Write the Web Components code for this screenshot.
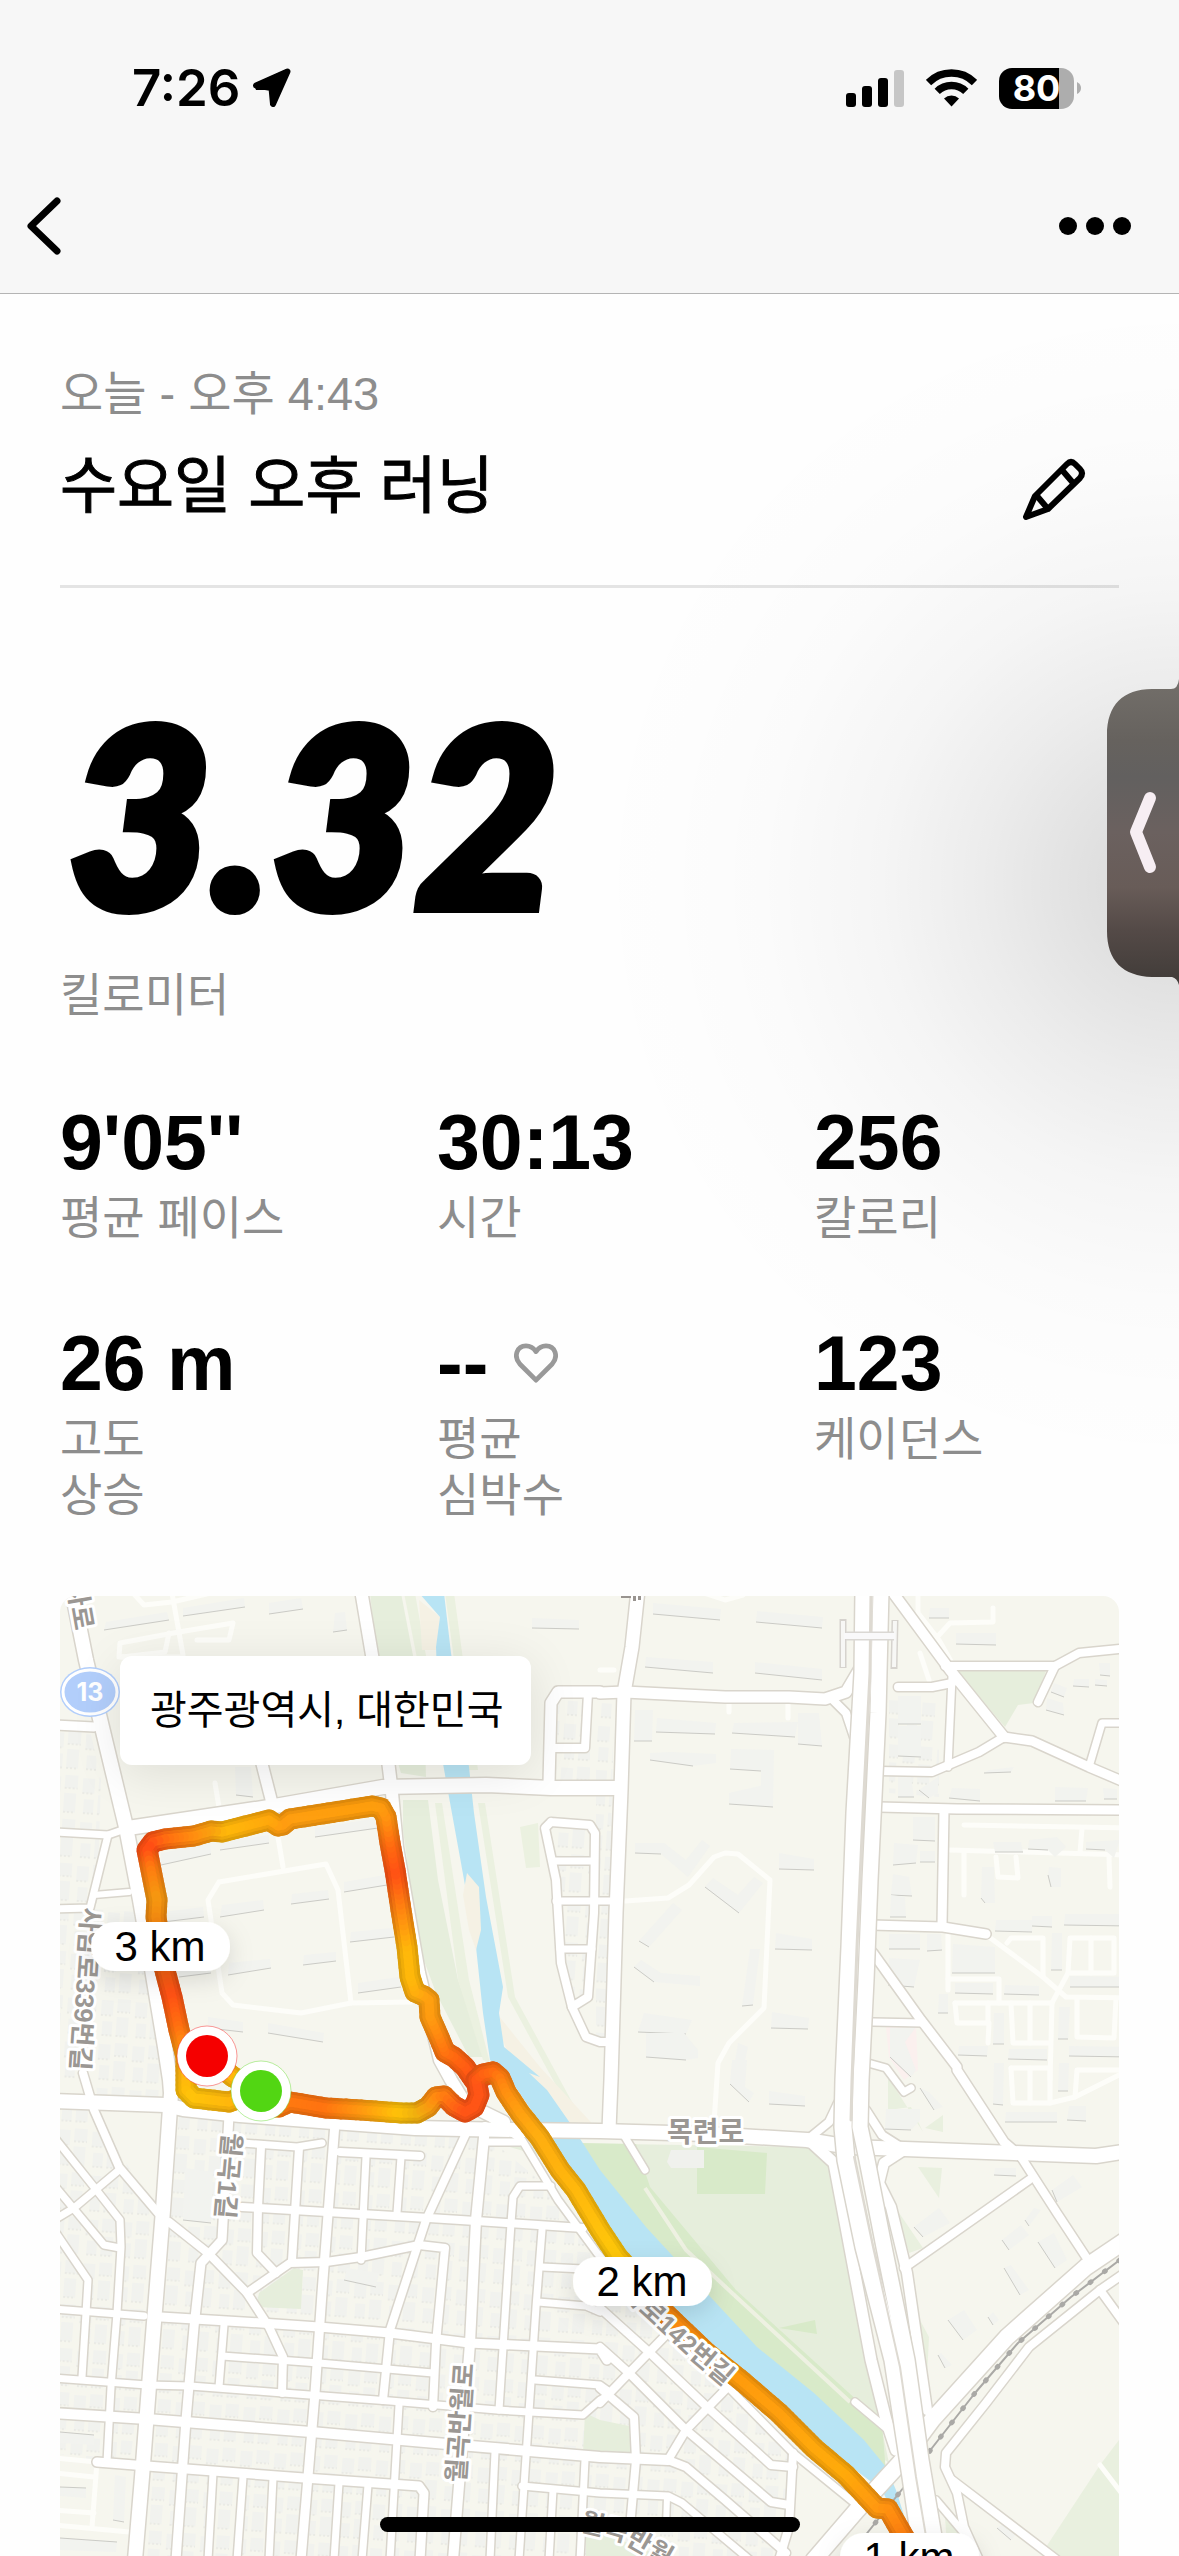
<!DOCTYPE html>
<html lang="ko">
<head>
<meta charset="utf-8">
<meta name="viewport" content="width=device-width, initial-scale=1">
<title>수요일 오후 러닝</title>
<style>
  html, body { margin: 0; height: 100%; }
  body {
    background: #fefefe; color: #000; overflow: hidden;
    font-family: "Liberation Sans", "Noto Sans CJK KR", sans-serif;
    --muted: #8d8d8d; --side: 60px;
  }
</style>
</head>
<body>
<run-app>
  <status-bar slot="top" time="7:26" battery="80"></status-bar>
  <nav-bar slot="top"></nav-bar>
  <run-title when="오늘 - 오후 4:43">수요일 오후 러닝</run-title>
  <run-distance value="3.32">킬로미터</run-distance>
  <stat-grid>
    <run-stat value="9'05''">평균 페이스</run-stat>
    <run-stat value="30:13">시간</run-stat>
    <run-stat value="256">칼로리</run-stat>
    <run-stat value="26 m">고도<br>상승</run-stat>
    <run-stat value="--" heart>평균<br>심박수</run-stat>
    <run-stat value="123">케이던스</run-stat>
  </stat-grid>
  <route-map>광주광역시, 대한민국</route-map>
  <side-tab slot="overlay"></side-tab>
  <home-indicator slot="overlay"></home-indicator>
</run-app>

<script>
const define = (name, render) => customElements.define(name, class extends HTMLElement {
  constructor() { super(); this.attachShadow({ mode: 'open' }); }
  connectedCallback() { this.shadowRoot.innerHTML = render(this); }
});

const BUTTON = 'button{border:0;padding:0;margin:0;background:none;color:inherit;font:inherit;display:block;cursor:pointer} svg{display:block}';

define('run-app', () => `
<style>
  :host { display: flex; flex-direction: column; height: 100vh; position: relative; overflow: hidden; }
  header { flex: none; background: #f7f7f7; border-bottom: 1px solid #b4b4b4; }
  main { flex: 1; min-height: 0; display: flex; flex-direction: column; padding: 68px var(--side) 0; }
</style>
<header><slot name="top"></slot></header>
<main><slot></slot></main>
<slot name="overlay"></slot>`);

define('status-bar', el => `
<style>
  :host { display: flex; align-items: center; justify-content: space-between; height: 176px; padding: 0 98px 0 132px; }
  div { display: flex; align-items: center; }
  .time { gap: 12px; font: 600 51px/60px Inter, sans-serif; }
  .icons { gap: 22px; }
  svg { display: block; }
  .battery { display: flex; align-items: center; gap: 3px; }
  .cell { width: 75px; height: 41px; border-radius: 13px; justify-content: center; color: #fff;
    font: 700 36px/41px Inter, sans-serif; background: linear-gradient(90deg, #000 60px, #adadad 60px); }
</style>
<div class="time"><span>${el.getAttribute('time')}</span>
  <svg width="40" height="40" viewBox="0 0 40 40"><path d="M4 17.500 35.500 3.500 21 36 19.500 20Z" stroke="#000" stroke-width="6" stroke-linejoin="round"/><path d="M2 16 35 1 22 37 18 37 18 22 4 22Z"/></svg>
</div>
<div class="icons">
  <svg width="58" height="38" viewBox="0 0 58 38"><rect y="24" width="10" height="14" rx="3"/><rect x="16" y="17" width="10" height="21" rx="3"/><rect x="32" y="9" width="10" height="29" rx="3"/><rect x="48" y="1" width="10" height="37" rx="3" fill="#c6c6c6"/></svg>
  <svg width="51" height="38" viewBox="0 0 51 38"><g fill="none" stroke="#000" stroke-width="7.500"><path d="M2.500 13.500A32.500 32.500 0 0 1 48.500 13.500"/><path d="M11.200 22.400A20.500 20.500 0 0 1 39.800 22.400"/></g><path d="M18 29.500a11 11 0 0 1 15 0L25.500 37.500z"/></svg>
  <div class="battery"><div class="cell">${el.getAttribute('battery')}</div><svg width="4" height="12" viewBox="0 0 4 12"><path d="M0 0q4 2 4 6t-4 6z" fill="#adadad"/></svg></div>
</div>`);

define('nav-bar', () => `
<style>
  ${BUTTON}
  :host { display: flex; align-items: center; justify-content: space-between; height: 100px; padding: 0 47px 17px 25px; }
</style>
<button aria-label="뒤로"><svg width="38" height="60" viewBox="0 0 38 60"><path d="M32 5 6 30 32 55" fill="none" stroke="#000" stroke-width="7" stroke-linecap="round" stroke-linejoin="round"/></svg></button>
<button aria-label="더 보기"><svg width="74" height="20" viewBox="0 0 74 20"><circle cx="10" cy="10" r="9"/><circle cx="37" cy="10" r="9"/><circle cx="64" cy="10" r="9"/></svg></button>`);

define('run-title', el => `
<style>
  ${BUTTON}
  :host { display: block; flex: none; padding-bottom: 54px; border-bottom: 3px solid #e4e4e4; }
  p { margin: 0 0 17px; font-size: 47px; line-height: 64px; color: var(--muted); }
  .row { display: flex; align-items: center; justify-content: space-between; padding-right: 29px; }
  h1 { margin: 0; font-weight: 400; font-size: 62px; line-height: 88px; -webkit-text-stroke: 1px #000; }
</style>
<p>${el.getAttribute('when')}</p>
<div class="row"><h1><slot></slot></h1>
  <button aria-label="이름 편집"><svg width="72" height="72" viewBox="0 0 72 72" fill="none" stroke="#000" stroke-width="6" stroke-linejoin="round"><path d="M8 66 17 45 49 13Q53 9 57 13L62 18Q66 22 62 27L30 58Z"/><path d="M44 19 56 33M19 45 30 58"/></svg></button>
</div>`);

define('run-distance', el => `
<style>
  :host { display: block; flex: none; margin-top: 104px; color: var(--muted); font-size: 46px; line-height: 56px; }
  strong { display: block; margin-bottom: 35px; color: #000; font: italic 900 248px/240px Lato, sans-serif; -webkit-text-stroke: 10px #000; padding-left: 8px; }
</style>
<strong>${el.getAttribute('value')}</strong><slot></slot>`);

define('stat-grid', () => `
<style>
  :host { display: grid; flex: none; grid-template-columns: 377fr 377fr 305fr; row-gap: 77px; margin: 79px 0 73px; }
</style><slot></slot>`);

define('run-stat', el => `
<style>
  :host { display: block; color: var(--muted); font-size: 46px; line-height: 56px; }
  .value { display: flex; align-items: center; gap: 26px; margin-bottom: 8px; color: #000; font-weight: 700; font-size: 77px; line-height: 80px; white-space: pre; }
</style>
<div class="value">${el.getAttribute('value')}${el.hasAttribute('heart') ? '<svg width="44" height="40" viewBox="0 0 46 42"><path d="M23 39 6 22C-1 14 3 3 12.500 3Q19 3 23 9Q27 3 33.500 3C43 3 47 14 40 22Z" fill="none" stroke="#999" stroke-width="5" stroke-linejoin="round"/></svg>' : ''}</div><slot></slot>`);

define('side-tab', () => `
<style>
  ${BUTTON}
  :host { position: absolute; top: 294px; right: 0; width: 600px; height: 1282px; pointer-events: none; display: block;
    background: radial-gradient(circle at 100% 590px, rgba(0,0,0,.15) 0, rgba(0,0,0,.12) 80px, rgba(0,0,0,.07) 200px, rgba(0,0,0,.035) 300px, rgba(0,0,0,.012) 420px, rgba(0,0,0,.004) 520px, transparent 600px); }
  button { position: absolute; top: 385px; right: 0; pointer-events: auto; }
</style>
<button aria-label="사이드 패널 열기"><svg width="72" height="310" viewBox="0 0 72 310">
  <defs><linearGradient id="g" x1="0" y1="0" x2="0" y2="1"><stop offset="0" stop-color="#736f6a"/><stop offset=".2" stop-color="#66625e"/><stop offset=".32" stop-color="#62605f"/><stop offset=".5" stop-color="#6b615f"/><stop offset=".68" stop-color="#685c58"/><stop offset=".82" stop-color="#544a47"/><stop offset="1" stop-color="#403b38"/></linearGradient></defs>
  <path d="M72 0Q71 10 64 10H45C16 10 0 26 0 56V252C0 282 16 297 45 298H65Q70 299 72 306Z" fill="url(#g)"/>
  <path d="M43 119 29 153 43 188" fill="none" stroke="#f7eef3" stroke-width="12" stroke-linecap="round" stroke-linejoin="round"/>
</svg></button>`);

define('home-indicator', () => `
<style>:host { position: absolute; left: 50%; bottom: 24px; width: 420px; height: 15px; margin-left: -210px; border-radius: 8px; background: #000; }</style>`);

/* ---------- map data ----------
   Four survey tiles, each with its own origin; points are "u,v" in tile units. */
const TILE = { A: [-20, -16], B: [540, -16], C: [-20, 464], D: [540, 464] };
const at = (t, u, v) => [Math.round(TILE[t][0] + u / 2.8), Math.round(TILE[t][1] + v / 3)];
/* "A 1,2 3,4 B 5,6" -> list of map points */
const points = text => {
  let tile = 'A'; const out = [];
  for (const w of text.trim().split(/\s+/)) {
    if (TILE[w]) tile = w; else out.push(at(tile, ...w.split(',').map(Number)));
  }
  return out;
};
const line = text => 'M' + points(text).map(p => p.join(' ')).join('L');

const ROADS = [
 [15,'A 90,30 130,240 170,430 240,740 280,960 310,1150 350,1400 365,1500 C 368,100 345,450 310,900 285,1250 265,1500'],
 [13,'A 900,30 960,420 985,640 1000,800 1060,1180 1120,1440 1150,1500 C 1190,130 1300,185'],
 [15,'A 245,745 640,680 960,620 1250,615 1430,625 1568,625 B 50,625'],
 [10,'A 40,435 150,440'],[8,'A 40,755 190,765 245,745'],[8,'A 190,765 140,985 40,988'],[7,'A 150,945 250,935'],
 [12,'A 620,540 650,670'],[12,'A 1425,610 1432,370 1450,335 1568,335 B 0,338 70,335'],[9,'A 1430,505 1525,505 1535,340'],
 [9,'A 1430,725 1540,735 1555,760 1550,1000 1535,1250 1490,1280 1460,1150 1445,900 1415,745 1430,725'],
 [8,'A 1440,842 1550,842'],[8,'A 1445,963 1568,963 B 35,963'],[8,'A 1455,1108 1545,1108'],[9,'A 1490,1280 1530,1370 1568,1385 B 20,1385'],
 [14,'B 107,30 90,200 68,340 58,630 45,1000 38,1200 30,1500 D 25,210'],
 [12,'B 70,335 350,350 530,352 630,358 690,335 725,270'],[9,'B 650,358 690,400 712,470'],
 [11,'B 815,30 980,270 1130,470'],[10,'B 1130,470 1210,482 1370,560 1480,612'],[9,'B 965,258 1275,258 1340,218 1480,203'],
 [9,'B 1275,258 1225,365'],[9,'B 835,320 930,320 985,310'],[8,'B 985,290 975,560'],[9,'B 780,572 930,575 1060,515 1130,470'],
 [8,'B 1370,560 1405,430 1480,428'],[10,'B 780,680 1000,688 1480,690'],[10,'B 962,690 957,1035'],[10,'B 760,1035 960,1040 1080,1062'],
 [10,'B 765,1120 900,1320 1000,1460 D 1000,30 1130,245 1180,290'],[9,'D 1180,290 1280,460 1365,600'],
 [8,'B 765,1325 905,1328'],[8,'B 750,1450 800,1465 D 800,25 850,95 870,85'],
 [15,'C 40,122 350,135 400,148 560,165 820,185 1050,205 1330,210 1568,212 D 300,222 580,240 700,262 1160,278 1390,288 1480,274'],
 [9,'D 665,130 640,185 580,240'],[9,'D 745,150 790,225 850,268'],
 [12,'D 590,245 655,310 760,900 800,1080 830,1170'],[11,'D 850,270 795,310 780,370 815,440 860,640 915,1050'],
 [9,'D 850,625 1200,360'],[17,'D 600,1500 720,1350 840,1210 930,1080 1140,830 1360,620 1480,535'],
 [9,'D 1480,630 1400,690 1200,860 1080,1030 970,1180 965,1220 1000,1300 1020,1400 1060,1500'],
 [9,'D 1400,690 1480,810'],[9,'D 985,1260 1280,1500'],[8,'D 940,1320 1020,1420'],[8,'D 715,1025 800,1105'],[8,'D 70,230 125,330'],
 [9,'C 120,40 150,150 220,320 330,460'],[9,'C 360,485 470,580 580,700 640,800 680,890 678,1000'],
 [8,'C 40,230 150,380 225,480 228,560 215,760 200,980 188,1205'],[8,'C 40,480 95,445 220,330'],[8,'C 40,375 180,555 225,565'],
 [8,'C 40,510 135,660 130,760 118,950'],[8,'C 40,748 290,768'],[10,'C 340,770 620,790 780,800 980,820 1200,848 1568,868 D 20,900'],
 [8,'C 40,955 300,975 420,978 680,1000 980,1022 1280,1050 1520,1065 1568,1020 D 25,1005'],[11,'C 40,1058 300,1078 760,1115 1140,1152 1568,1190 D 190,1200'],
 [10,'C 160,1205 300,1218 740,1255 1060,1278 1075,1300 1065,1500'],[10,'C 530,165 510,540 450,610 430,800 410,1080 380,1500'],
 [9,'C 620,260 610,440 608,580 660,640'],[9,'C 725,265 705,600'],[9,'C 565,440 1090,475 1220,482 1520,505'],
 [8,'C 565,250 720,262 790,250'],[9,'C 840,275 1065,288'],[8,'C 912,290 900,600'],[8,'C 1010,290 1000,460'],
 [10,'C 825,190 790,700 770,1000 730,1500'],[9,'C 580,700 700,610 800,605 900,590 1060,555 1135,565 1110,850 1100,1040'],
 [9,'C 1200,200 1080,480 980,810 960,1020'],[11,'C 1245,200 1220,480 1205,850 1180,1200 1155,1500'],[8,'C 1250,245 1345,245'],
 [8,'C 1430,378 1345,378 1325,410 1320,490 1285,1050'],[8,'C 1405,510 1390,740 1365,1100 1340,1500'],[8,'C 1405,620 1520,628'],
 [8,'C 1395,725 1530,738 1568,755'],[8,'C 1385,960 1568,975 D 20,990'],[8,'C 1350,1278 1568,1298 D 190,1308 230,1330 420,1500'],[8,'C 515,795 500,980'],
 [8,'C 510,888 780,910 1100,940'],[8,'C 1005,1035 980,1500'],[8,'C 485,1240 470,1500'],[8,'C 568,1250 552,1500'],[8,'C 652,1255 640,1500'],
 [8,'C 838,1270 822,1500'],[8,'C 918,1275 902,1500'],[8,'C 1275,1175 1260,1500'],[8,'C 1525,1200 1512,1500'],[8,'C 1435,1290 1425,1500'],
 [8,'C 1230,150 1350,240 1450,420 1560,580 D 50,650 200,830 360,985 540,1180 720,1335'],
 [9,'D 0,745 140,880 300,1040 480,1215 540,1220'],[9,'D 0,860 80,940 240,1110 480,1325 530,1335'],[9,'D 0,1030 80,940 180,830'],
 [9,'D 350,990 240,1110 190,1200'],[9,'D 0,985 95,1070 100,1200 85,1400'],[9,'D 190,1200 240,1220 350,1320 520,1480'],
 [9,'D 540,1180 530,1400 500,1500'],[7,'D 188,1310 185,1400'],
];
/* carriageways of the urban expressway lie above every other road */
const EXPRESS = [
 [18,'B 740,30 735,280 715,700 700,1100 683,1500 D 680,200 690,300 740,560 820,900 870,1250 905,1500'],
 [16,'B 788,30 778,400 755,900 745,1200 730,1500 D 728,200 748,300 795,560 860,900 900,1200 945,1500'],
];
const PATHS = [
 'B 70,963 190,955 250,915 320,830 350,818 385,822 475,900 460,1285 360,1390 330,1450 D 318,190',
 'A 500,905 800,853 835,930 870,1270 730,1300 540,1275 510,1240 470,960 500,905','A 665,770 680,860','A 490,610 505,700','A 870,1270 1040,1265',
 'A 370,40 400,225','A 260,40 290,75 370,65 480,40','A 400,230 220,230 225,190 390,155 540,130 530,180 440,180','A 360,160 350,215 230,230',
 'B 980,810 1480,825','B 1020,735 1480,745','B 1020,820 1020,945','B 1350,745 1345,820','B 1110,830 1115,890 1170,895 1165,830',
 'B 1090,1070 1240,1190 1305,1250 1480,1255','B 1140,1090 1150,1073 1240,1073 1240,1190','B 1310,1180 1315,1073 1440,1073 1440,1180 1310,1180 1265,1270 1260,1500',
 'B 1375,1073 1375,1180','B 995,1270 1265,1270','B 995,1270 1000,1330 1090,1330 1087,1390','B 1087,1270 1087,1330','B 1150,1270 1155,1390 1260,1390',
 'B 1205,1270 1205,1390','B 1335,1255 1335,1370 1440,1375 1445,1255','B 975,1050 975,1230','B 975,1197 1118,1197 1118,1270',
 'D 1150,25 1155,130 1260,130 1330,110 1480,30','D 1150,25 1260,25 1260,130','D 1205,25 1205,130','D 1330,110 1335,30 1480,30',
 'B 890,40 890,100 950,180 985,250','B 950,165 980,128 1100,125 1100,85','B 895,220 920,300','B 0,270 40,270','B 360,370 360,395','B 527,370 527,415',
 'B 290,40 350,60 400,45','B 1425,830 1428,920',
 'C 40,1195 160,1205 145,1400','C 40,1240 150,1252','C 40,1350 150,1360','C 40,1395 250,1415','D 1400,1215 1480,1330',
];
const GREENS = [
 ['#e6eedc','A 925,40 1010,40 1075,400 1080,590 1010,580 960,400'],['#ebf1e0','A 1020,40 1050,40 1110,400 1085,400'],['#ebf1e0','A 1135,40 1160,40 1225,570 1200,570'],
 ['#e6eedc','A 1015,660 1085,660 1115,900 1170,1200 1250,1430 1200,1430 1110,1240 1060,1100 1015,750'],['#ebf1e0','A 1105,670 1125,670 1200,1200 1260,1450 1240,1440 1170,1200'],
 ['#ebf1e0','A 1225,670 1245,670 1330,1250 C 1505,160 1490,165 A 1310,1250'],['#ebf1e0','A 1345,740 1395,730 1400,860 1360,865'],
 ['#f5f1e4','A 1060,60 1120,110 1110,210 1070,210'],['#f5f1e4','C 1250,-180 1400,20 1568,215 1490,215 1370,40 1320,0'],
 ['#e6eedc','D -300,245 590,262 640,320 690,600 810,1210 600,1050 300,720 -30,330'],
 ['#d8eac9','D -60,248 100,252 140,380 380,690 790,1090 800,1240 600,1050 130,540 -60,350'],
 ['#d8eac9','D 272,262 467,278 462,402 272,402'],['#d8eac9','D 500,803 603,780 607,822'],['#f0f1ed','D 200,270 290,270 292,325 200,325 188,305'],
 ['#e6eedc','B 1000,272 1250,272 1215,368 1170,375 1135,440'],['#e9f0df','D 805,50 905,215 870,140 805,150'],['#e9f0df','D 910,205 960,165 960,215'],
 ['#e9f0df','D 890,320 957,325 950,415'],['#e9f0df','D 825,440 903,565 865,580'],['#e9f0df','D 875,740 922,830 915,950'],
 ['#e9f0df','D 1480,1100 1400,1215 1250,1460 1290,1500 1480,1500'],['#e9f0df','D 965,1370 1040,1430 1060,1500 975,1500'],
 ['#e6eedc','C 605,740 612,700 710,625 737,630 732,747'],['#e6eedc','C 1525,1060 1568,1080 D 95,1100 90,1195 C 1520,1180'],
 ['#e6eedc','D -40,1410 60,1440 200,1500 -40,1500'],['#fbf0ee','B 800,1340 885,1340 890,1470 850,1500 810,1430'],
];
const RIVER = 'A 1060,40 1130,40 1150,220 1200,560 1215,700 1250,950 1295,1220 1285,1300 1300,1400 1400,1490 C 1370,40 1420,90 1485,190 1568,330 D 130,500 290,690 440,860 600,1000 740,1140 800,1220 830,1290 880,1460 840,1400 790,1290 640,1170 340,900 240,790 100,620 -20,450 C 1485,320 1300,30 A 1260,1440 1240,1300 1220,1100 1180,850 1145,650 1120,500 1110,200 1120,110';
const SAND = ['A 1185,945 1195,880 1228,920 1235,1050 1220,1110 1200,1050'];
/* apartment blocks: footprint, then the shaded lower edge */
const BLOCKS = [
 'A 180,150 360,120 355,95 185,125','A 400,108 575,80 570,55 400,85','A 640,103 735,88 730,55 640,70','A 820,157 860,150 855,95 825,100','A 770,770 945,743 945,715 770,745',
 'A 505,810 640,790 640,765 505,785','A 340,855 480,822 475,790 340,820','A 850,935 972,915 965,885 850,905','A 505,1010 628,990 625,960 510,975','A 703,972 808,957 805,930 705,942',
 'A 868,1087 990,1072 985,1045 870,1055','A 525,1186 648,1165 645,1137 530,1150','A 735,1156 830,1142 828,1115 738,1125','A 890,1240 1012,1222 1005,1190 890,1210','A 345,1025 460,1010 455,980 345,995',
 'A 390,1192 480,1180 478,1150 390,1165','A 470,1345 567,1357 567,1325 470,1310','A 637,1360 792,1387 795,1360 637,1330','A 1378,145 1510,148 1510,120 1378,115','A 550,645 595,650 590,560 545,560',
 'B 148,102 336,121 338,88 148,70','B 436,125 622,143 625,110 440,94','B 125,260 315,280 317,247 130,230','B 433,278 621,299 622,268 435,245','B 920,115 978,115 978,85 925,85','B 998,193 1108,195 1108,158 998,158',
 'B 833,432 900,433 900,348 835,348','B 833,528 900,530 900,438 833,438','B 95,482 145,483 147,390 98,390','B 158,455 322,463 325,428 160,415','B 370,460 545,470 553,425 375,430','B 553,492 622,498 613,400 555,400',
 'B 365,568 450,573 450,640 485,680 488,510 368,508','B 362,672 483,680 485,610 362,640','B 140,540 260,558 325,550 325,523 200,515 140,520','B 97,820 172,822 247,890 307,797 285,780 240,840 180,790 98,790',
 'B 295,922 389,1000 455,908 430,890 385,945 315,895','B 500,867 600,869 600,838 500,820','B 110,1083 137,1102 229,990 205,970','B 490,1107 593,1109 593,1077 492,1060','B 95,1162 150,1205 280,1218 280,1187 170,1180 115,1140',
 'B 398,1278 428,1276 448,1108 420,1108','B 480,1343 583,1347 585,1315 482,1297','B 107,1357 240,1362 258,1320 122,1298','B 130,1430 240,1440 275,1435 275,1410 235,1360 130,1360','B 370,1498 395,1500 413,1400 385,1390',
 'B 875,780 938,782 938,712 877,712','B 815,945 873,947 865,890 820,883','B 820,855 885,850 890,795 822,790','B 895,847 938,847 938,812 897,812','B 813,1010 857,1012 853,950 815,945','B 808,1108 895,1108 895,1062 810,1062',
 'B 915,1112 957,1110 955,1062 915,1062','B 985,1178 1105,1180 1105,1100 987,1092','B 805,1215 880,1220 895,1140 808,1135','B 812,1430 870,1490 885,1470 855,1385 885,1340 812,1345',
 'B 1105,815 1185,815 1180,785 1100,785','B 1197,806 1255,810 1275,832 1305,800 1280,770 1200,780','B 1360,808 1415,810 1440,835 1455,780 1360,785','B 1068,955 1077,970 1105,970 1103,860 1070,860','B 1255,885 1262,920 1290,922 1290,865 1258,862',
 'B 1107,1052 1210,1055 1210,1020 1110,1020','B 1210,1038 1265,1040 1265,1008 1210,1008','B 1300,1035 1480,1038 1480,1003 1302,1003','B 1263,1170 1293,1171 1293,1060 1266,1060','B 993,1240 1100,1243 1100,1210 993,1208',
 'B 1132,1243 1230,1245 1230,1217 1133,1215','B 1317,1220 1480,1222 1480,1190 1317,1187','B 946,1298 975,1300 975,1243 948,1243','B 1101,1392 1130,1393 1132,1300 1103,1300','B 1283,1377 1310,1378 1315,1282 1286,1282',
 'B 1003,1425 1083,1427 1085,1398 1005,1398','B 1143,1437 1252,1439 1252,1408 1145,1408','B 1314,1428 1480,1430 1480,1400 1314,1398','D 1100,133 1127,135 1130,10 1103,10','D 1283,92 1310,94 1314,10 1286,10','D 1135,185 1280,187 1280,155 1137,155',
 'D 1308,180 1360,184 1362,138 1312,138','D 473,133 573,139 573,107 473,92','D 365,72 417,125 432,100 405,80 412,0 370,0','D 797,208 870,210 895,180 895,147 800,147','D 895,85 935,150 960,140 920,95','D 880,500 905,532 980,490 950,445',
 'D 1125,540 1145,570 1200,525 1180,495','D 1225,545 1275,625 1308,600 1270,520','D 1265,390 1280,425 1350,380 1325,345','D 1190,480 1200,498 1235,450 1215,445','D 1130,625 1175,705 1200,690 1150,615','D 975,780 1015,840 1055,810 1020,750',
 'D 945,885 965,925 985,915 955,880','D 1085,770 1100,795 1117,780 1100,755','D 1103,345 1165,349 1165,325 1105,325','D 1112,1405 1150,1440 1175,1410 1130,1390',
 'B 1075,580 1150,575 1158,560 1090,570','B 833,650 878,650 870,590 835,590','B 893,630 920,655 945,640 945,590','B 978,655 1065,663 1065,628 985,625','B 1275,662 1362,663 1365,625 1275,622','B 1410,657 1448,658 1448,628 1408,625',
 'B 1250,390 1298,405 1295,370 1252,355','B 1262,335 1300,352 1308,325 1270,308','B 1323,318 1368,320 1368,298 1328,298','B 1385,315 1420,318 1420,300 1387,298','B 1400,285 1427,287 1427,250 1398,250',
 'C 56,1115 152,1125 150,1155 56,1150','C 56,1280 130,1285 130,1313 56,1308','C 56,1433 215,1445 213,1475 56,1470','C 205,1380 235,1385 242,1250 210,1245','C 400,480 480,490 485,335 405,325','C 850,660 940,680 950,640 860,625',
];
/* areas filled with small houses */
const DENSE = ['A 40,450 140,450 170,600 160,980 190,1100 C 120,60 40,60','A 130,980 270,980 350,1500 C 330,110 160,110','C 40,150 150,150 340,480 250,1230 40,1180','C 390,170 1230,210 1430,390 1568,600 D 540,1190 520,1500 C 300,1500 360,480','A 1440,340 1540,340 1540,600 1440,600','A 1440,740 1550,740 1540,1260 1480,1260','B -10,360 40,360 20,1370 -10,1370','B 810,350 950,350 950,650 810,640'];

/* recorded track: tile, u, v, pace colour */
const TRACK = `C 619,93 ff7d10|C 600,140 ff8a10|C 670,142 ff7d10|C 700,125 ff7a10|C 800,145 ff7210|C 900,150 ff9510|C 1010,158 ffc208|C 1055,158 f0b20e|C 1085,142 f5a010|C 1110,110 ff8d10|C 1130,108 ff8010|C 1160,138 ff6a14|C 1190,155 ff5516|C 1215,140 ff5516|C 1228,105 ff5516|C 1222,60 ff5516|C 1240,42 ff6012|C 1268,35 ff6a10|C 1288,55 ff7a10|C 1305,95 ff8d10|C 1345,160 ff9f10|C 1400,235 ffae10|C 1455,330 ffb20e|C 1500,390 ffb80c|C 1568,510 ffc00c|D 50,590 ffc808|D 110,660 ffb40c|D 180,755 ff8a10|D 300,880 ff920e|D 400,965 ff9c0c|D 500,1060 ff9f0e|D 600,1165 ffa80c|D 690,1245 ffaa0a|D 735,1300 ffa00c|D 775,1345 ff9a10|D 805,1348 ff9210|D 850,1430 ff8010|D 890,1500 ff7a10`;
const TRACK_END = `A 1268,1475 ff6a10|A 1215,1500 ff5516|A 1190,1460 ff5a14|A 1160,1432 ff6510|A 1135,1415 ff7010|A 1115,1365 ff8510|A 1092,1310 ff9a10|A 1090,1260 ff9f10|A 1075,1248 ffa010|A 1050,1235 ffac0e|A 1035,1190 ffb80a|A 1028,1100 ffb80a|A 1010,990 ff8a10|A 995,870 ff5014|A 980,790 ff6a10|A 968,710 ff9010|A 955,685 ff9a10|A 930,677 ff9f0e|A 860,690 ff9f0e|A 700,718 ff9f10|A 680,735 ff9c10|A 665,738 ff9c10|A 640,720 ffa60c|A 510,757 ffb80a|A 480,752 f8a40e|A 430,768 ff9210|A 350,777 ff7010|A 315,785 ff5a14|A 300,810 ff4a14|A 310,870 ff7a10|A 328,960 f59810|A 325,1010 f58e10|A 345,1150 f06a10|A 370,1250 ff5014|A 390,1350 ff7010|A 408,1430 ff9f10|A 408,1500 ffb810|C 410,90 ffbc08|C 430,115 ffc40a|C 530,125 ffb80c|C 619,93 ffae0c|C 540,50 ffb80a|C 467,-12 ffb810`;

const mix = (a, b, k, dim) => '#' + [0, 2, 4].map(i => {
  const p = parseInt(a.substr(i, 2), 16), q = parseInt(b.substr(i, 2), 16);
  return Math.round((p + (q - p) * k) * dim).toString(16).padStart(2, '0');
}).join('');
const track = text => {
  const pts = text.split('|').map(s => { const [t, uv, c] = s.split(' '); return [...at(t, ...uv.split(',').map(Number)), c]; });
  return [[21, .87], [15, .94], [9, 1]].map(([w, dim]) => {
    let out = '';
    for (let i = 1; i < pts.length; i++) {
      const [x0, y0, c0] = pts[i - 1], [x1, y1, c1] = pts[i];
      const n = Math.max(1, Math.round(Math.hypot(x1 - x0, y1 - y0) / 5));
      for (let k = 0; k < n; k++) {
        const p = j => `${(x0 + (x1 - x0) * j / n).toFixed(1)} ${(y0 + (y1 - y0) * j / n).toFixed(1)}`;
        out += `<path d="M${p(k)}L${p(k + 1)}" stroke="${mix(c0, c1, (k + .5) / n, dim)}"/>`;
      }
    }
    return `<g stroke-width="${w}">${out}</g>`;
  }).join('');
};
const roads = list => `<g stroke="#d9d5cc">${list.map(([w, p]) => `<path stroke-width="${w + 2}" d="${line(p)}"/>`).join('')}</g><g stroke="#fff">${list.map(([w, p]) => `<path stroke-width="${w - 1}" d="${line(p)}"/>`).join('')}</g>`;
const kmPill = (x, y, text) => `<g><rect x="${x - 69}" y="${y - 24}" width="139" height="49" rx="24" fill="#fff" filter="url(#soft)"/><text x="${x}" y="${y + 15}" text-anchor="middle" font-size="42">${text}</text></g>`;
const dot = (x, y, c) => `<circle cx="${x}" cy="${y}" r="30" fill="#fff" stroke="${c}" stroke-opacity=".4"/><circle cx="${x}" cy="${y}" r="21" fill="${c}"/>`;

define('route-map', () => `
<style>
  :host { display: block; position: relative; flex: 1; min-height: 0; overflow: hidden; border-radius: 16px 16px 0 0; background: #f6f6ee; }
  svg { display: block; width: 100%; height: 100%; }
  .place { position: absolute; left: 60px; top: 60px; padding: 0 28px 0 30px; border-radius: 12px; background: #fff; color: #000;
    font-size: 40px; line-height: 109px; box-shadow: 0 8px 50px rgba(0,0,0,.1); white-space: nowrap; }
  .street { font: 700 26px "Liberation Sans", "Noto Sans CJK KR", sans-serif; fill: #9b9793; stroke: #fff; stroke-width: 6px; paint-order: stroke; stroke-linejoin: round; }
</style>
<svg viewBox="0 0 1059 960" preserveAspectRatio="xMinYMin slice" role="img" aria-label="러닝 경로">
  <defs>
    <filter id="soft" x="-40%" y="-60%" width="180%" height="260%"><feDropShadow dx="0" dy="8" stdDeviation="12" flood-opacity=".13"/></filter>
    <pattern id="lots" width="34" height="44" patternUnits="userSpaceOnUse" patternTransform="rotate(4)"><path d="M2 4h12v15H2zM18 2h13v13H18zM4 25h10v14H4zM18 20h12v19H18z" fill="#f1f2ee"/><path d="M2 19h12M18 15h13M4 39h10M18 39h12" stroke="#e2e2dd" stroke-dasharray="2 2"/></pattern>
    <path id="p142" d="${line('D 22,640 94,742 234,880 400,1030')}"/>
    <path id="pBan" d="${line('C 1510,1410 D 0,1425 60,1442 200,1530')}"/>
  </defs>
  <g fill="url(#lots)">${DENSE.map(p => `<path d="${line(p)}Z"/>`).join('')}</g>
  ${GREENS.map(([c, p]) => `<path fill="${c}" d="${line(p)}Z"/>`).join('')}
  <path fill="#b8e4f4" d="${line(RIVER)}Z"/>
  ${SAND.map(p => `<path fill="#f5f1e4" d="${line(p)}Z"/>`).join('')}
  <g fill="none" stroke="#fdfdf9" stroke-width="5" stroke-linejoin="round" stroke-linecap="round">${PATHS.map(p => `<path d="${line(p)}"/>`).join('')}</g>
  <path fill="none" stroke="#eef1e2" stroke-width="4" d="${line('D 125,385 240,570 370,700 700,1025')}"/>
  ${BLOCKS.map(p => { const q = points(p); return `<path fill="#f2f3ef" d="${line(p)}Z"/><path stroke="#cbcbc6" d="M${q[0].join(' ')}L${q[1].join(' ')}"/>`; }).join('')}
  <g fill="none" stroke-linejoin="round" stroke-linecap="round">
    ${roads(ROADS)}
    <path stroke="#aaa9a6" stroke-width="2" d="${line('D 740,1430 850,1280 930,1165 1050,1000 1170,850 1320,710 1480,580')}"/>
    <path stroke="#aaa9a6" stroke-width="5" stroke-dasharray="1 17" d="${line('D 740,1430 850,1280 930,1165 1050,1000 1170,850 1320,710 1480,580')}"/>
    ${roads(EXPRESS)}
    <path stroke="#dedad2" stroke-width="3" d="${line('B 760,40 755,280 735,700 720,1100 706,1500 D 704,180')}"/>
    <path stroke="#dedad2" stroke-width="2" d="${line('D 712,290 765,560 840,920 885,1250 925,1500')}"/>
    <g stroke-linecap="butt"><path stroke="#d6d3ce" stroke-width="7" d="${line('B 680,118 680,263')}${line('B 827,120 822,266')}"/><path stroke="#f7f7f5" stroke-width="4" d="${line('B 680,122 680,260')}${line('B 827,123 822,262')}"/><path stroke="#dad8d4" stroke-width="9" d="${line('B 690,167 822,167')}"/><path stroke="#f9f9fa" stroke-width="6" d="${line('B 682,167 826,167')}"/></g>
    ${track(TRACK_END)}${track(TRACK)}
  </g>
  <path d="M561 0h10v2h-10zM573 0h3v5h-3zM578 0h3v4h-3z" fill="#98938f"/>
  <g class="street">
    <text transform="translate(7 -12) rotate(80)">사로</text>
    <text transform="translate(22 311) rotate(94)">사암로339번길</text>
    <text transform="translate(163 536) rotate(95)">월곡1길</text>
    <text transform="translate(405 887) rotate(-86)">월곡반월로</text>
    <text x="607" y="546" style="font-size:28px">목련로</text>
    <text><textPath href="#p142">사암로142번길</textPath></text>
    <text><textPath href="#pBan">월곡반월로</textPath></text>
  </g>
  <ellipse cx="30" cy="96" rx="30" ry="25" fill="#b2cefb"/><ellipse cx="30" cy="96" rx="27" ry="22" fill="none" stroke="#fff" stroke-width="3"/>
  <text x="30" y="105" text-anchor="middle" fill="#fff" style="font:700 25px Inter,sans-serif">13</text>
  ${dot(147, 460, '#f50000')}${dot(201, 495, '#52d613')}
  ${kmPill(100, 350, '3 km')}${kmPill(582, 685, '2 km')}${kmPill(849, 961, '1 km')}
</svg>
<div class="place"><slot></slot></div>`);
</script>
</body>
</html>
